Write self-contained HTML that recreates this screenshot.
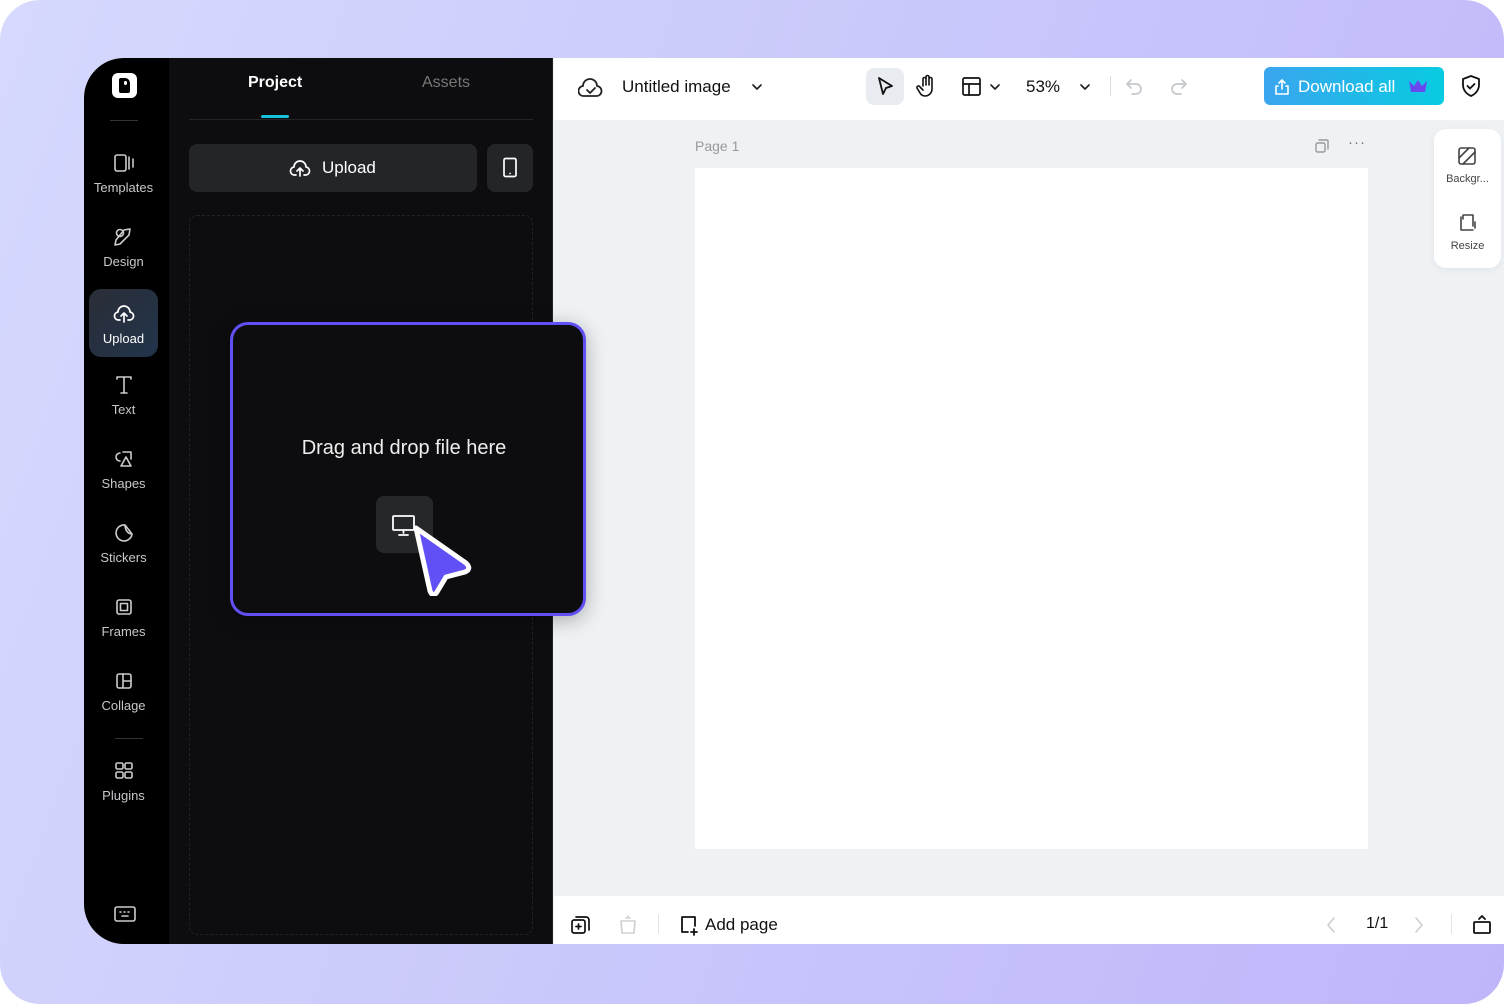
<!DOCTYPE html>
<html><head><meta charset="utf-8"><style>
*{box-sizing:border-box;margin:0;padding:0}
body{width:1504px;height:1004px;background:#fff;font-family:"Liberation Sans",sans-serif;overflow:hidden;position:relative}
.bg{position:absolute;inset:0;border-radius:40px;background:linear-gradient(110deg,#d6d9fd 0%,#c9c8fb 50%,#bfb5fa 100%)}
.app{position:absolute;left:84px;top:58px;width:1420px;height:886px;overflow:hidden;border-radius:40px 0 0 40px;background:#eff2f5}
.side{position:absolute;left:0;top:0;width:85px;height:886px;background:#000}
.panel{position:absolute;left:85px;top:0;width:384px;height:886px;background:#0d0d10;border-right:1px solid #222}
.nav{position:absolute;left:5px;width:69px;height:68px;border-radius:12px;text-align:center;color:#c8c8cc;font-size:13px}
.nav svg{display:block;margin:14px auto 6px}
.nav.act{background:linear-gradient(135deg,#2a2d36,#22344c);color:#fff}
.top{position:absolute;left:470px;top:0;right:0;height:62px;background:#fff}
.bot{position:absolute;left:470px;bottom:0;right:0;height:48px;background:#fff}
svg{fill:none;stroke-linecap:round;stroke-linejoin:round}
.t{position:absolute;white-space:nowrap}
</style></head><body>
<div class="bg"></div>
<div class="app">
 <div class="side">
  <div style="position:absolute;left:28px;top:15px;width:25px;height:25px;background:#fff;border-radius:6px"><div style="position:absolute;left:7px;top:5px;width:11px;height:15px;background:#000;border-radius:2px 5px 2px 2px"></div><div style="position:absolute;left:12px;top:8px;width:3px;height:4px;background:#fff;border-radius:2px"></div></div>
  <div style="position:absolute;left:26px;top:62px;width:28px;height:1px;background:#333"></div>
  <div class="nav" style="top:80px"><svg width="22" height="22" viewBox="0 0 22 22" stroke="#ccc" stroke-width="1.6"><rect x="2" y="3" width="11" height="16" rx="2"/><path d="M16 5v12M20 7v8"/></svg>Templates</div>
  <div class="nav" style="top:154px"><svg width="22" height="22" viewBox="0 0 22 22" stroke="#ccc" stroke-width="1.6"><circle cx="7" cy="7" r="3.5"/><path d="M11 4l6-1-1 6-9 9-5 1 1-5z"/></svg>Design</div>
  <div class="nav act" style="top:231px"><svg width="22" height="22" viewBox="0 0 22 22" stroke="#fff" stroke-width="1.7"><path d="M7 17H6a4 4 0 0 1-1-8 6 6 0 0 1 12 0 4 4 0 0 1-1 8h-1M11 19v-8M8 13l3-3 3 3"/></svg>Upload</div>
  <div class="nav" style="top:302px"><svg width="22" height="22" viewBox="0 0 22 22" stroke="#ccc" stroke-width="1.6"><path d="M4 5V3h14v2M11 3v16M8 19h6"/></svg>Text</div>
  <div class="nav" style="top:376px"><svg width="22" height="22" viewBox="0 0 22 22" stroke="#ccc" stroke-width="1.6"><path d="M7 5a4 4 0 1 0 0 8M10 4h8v7M13 9l-5 9h10z"/></svg>Shapes</div>
  <div class="nav" style="top:450px"><svg width="22" height="22" viewBox="0 0 22 22" stroke="#ccc" stroke-width="1.6"><path d="M19 12a8 8 0 1 1-7-9c0 5 3 9 7 9zM12 3l7 9"/></svg>Stickers</div>
  <div class="nav" style="top:524px"><svg width="22" height="22" viewBox="0 0 22 22" stroke="#ccc" stroke-width="1.6"><rect x="4" y="4" width="14" height="14" rx="2"/><rect x="7.5" y="7.5" width="7" height="7"/></svg>Frames</div>
  <div class="nav" style="top:598px"><svg width="22" height="22" viewBox="0 0 22 22" stroke="#ccc" stroke-width="1.6"><rect x="4" y="4" width="14" height="14" rx="2"/><path d="M10 4v14M10 11h8"/></svg>Collage</div>
  <div style="position:absolute;left:31px;top:680px;width:28px;height:1px;background:#333"></div>
  <div class="nav" style="top:688px"><svg width="22" height="22" viewBox="0 0 22 22" stroke="#ccc" stroke-width="1.6"><rect x="3" y="3" width="7" height="6" rx="1.5"/><rect x="12" y="3" width="7" height="6" rx="1.5"/><rect x="3" y="12" width="7" height="6" rx="1.5"/><rect x="12" y="12" width="7" height="6" rx="1.5"/></svg>Plugins</div>
  <svg style="position:absolute;left:30px;top:847px" width="22" height="18" viewBox="0 0 22 18" stroke="#ccc" stroke-width="1.6"><rect x="1" y="2" width="20" height="14" rx="2"/><path d="M6 7h1M10 7h1M14 7h1M8 11h6"/></svg>
 </div>
 <div class="panel">
  <div class="t" style="left:79px;top:16px;color:#fff;font-size:16px;font-weight:bold">Project</div>
  <div class="t" style="left:253px;top:16px;color:#777;font-size:16px">Assets</div>
  <div style="position:absolute;left:20px;top:61px;width:344px;height:1px;background:#252528"></div>
  <div style="position:absolute;left:92px;top:57px;width:28px;height:3px;background:#16c2d9;border-radius:2px"></div>
  <div style="position:absolute;left:20px;top:86px;width:288px;height:48px;background:#242529;border-radius:8px"></div>
  <svg style="position:absolute;left:120px;top:100px" width="22" height="20" viewBox="0 0 22 20" stroke="#fff" stroke-width="1.7"><path d="M7 17H6a4 4 0 0 1-1-8 6 6 0 0 1 12 0 4 4 0 0 1-1 8h-1M11 18v-7M8 13l3-3 3 3"/></svg>
  <div class="t" style="left:153px;top:100px;color:#fff;font-size:17px">Upload</div>
  <div style="position:absolute;left:318px;top:86px;width:46px;height:48px;background:#242529;border-radius:8px"></div>
  <svg style="position:absolute;left:332px;top:99px" width="18" height="22" viewBox="0 0 18 22" stroke="#fff" stroke-width="1.7"><rect x="3" y="1.5" width="12" height="18" rx="1.5"/><path d="M9 16.5h0"/></svg>
  <div style="position:absolute;left:20px;top:157px;width:344px;height:720px;border:1px dashed #222;border-radius:8px"></div>
 </div>
 <div style="position:absolute;left:146px;top:264px;width:356px;height:294px;background:#0d0d10;border:3px solid #6150f5;border-radius:18px;box-shadow:0 4px 20px rgba(0,0,0,.3)">
  <div class="t" style="left:0;right:8px;top:112px;text-align:center;color:#eee;font-size:20px">Drag and drop file here</div>
  <div style="position:absolute;left:143px;top:171px;width:57px;height:57px;background:#26272b;border-radius:8px"></div>
  <svg style="position:absolute;left:158px;top:189px" width="26" height="24" viewBox="0 0 26 24" stroke="#fff" stroke-width="1.8"><rect x="2" y="2" width="21" height="14" rx="1"/><path d="M12.5 16v3M8 21h9"/></svg>
  <svg style="position:absolute;left:176px;top:196px" width="70" height="75" viewBox="0 0 70 75"><path d="M7 7 L57 42 Q63 48 56 51 L37 56 L28 71 Q24 77 21 70 Z" fill="#6150f5" stroke="#fff" stroke-width="5"/></svg>
 </div>
 <div class="top">
  <svg style="position:absolute;left:24px;top:18px" width="26" height="24" viewBox="0 0 26 24" stroke="#222" stroke-width="1.8"><path d="M7 20H6a5 5 0 0 1-1-10 7 7 0 0 1 14 0 5 5 0 0 1-1 10z"/><path d="M9 14l3 3 5-5"/></svg>
  <div class="t" style="left:68px;top:19px;font-size:17px;color:#111">Untitled image</div>
  <svg style="position:absolute;left:196px;top:22px" width="14" height="14" viewBox="0 0 14 14" stroke="#222" stroke-width="1.7"><path d="M3 5l4 4 4-4"/></svg>
  <div style="position:absolute;left:312px;top:10px;width:38px;height:37px;background:#e8ebef;border-radius:8px"></div>
  <svg style="position:absolute;left:320px;top:17px" width="22" height="22" viewBox="0 0 22 22" stroke="#111" stroke-width="1.8"><path d="M5 3l13 8-6 2-3 6z"/></svg>
  <svg style="position:absolute;left:362px;top:16px" width="22" height="24" viewBox="0 0 22 24" stroke="#111" stroke-width="1.6"><path d="M7 12V5a1.5 1.5 0 0 1 3 0v6V3a1.5 1.5 0 0 1 3 0v8V5a1.5 1.5 0 0 1 3 0v10a7 7 0 0 1-7 7 6 6 0 0 1-5-3l-3-5a1.5 1.5 0 0 1 3-1l3 3"/></svg>
  <svg style="position:absolute;left:407px;top:18px" width="22" height="22" viewBox="0 0 22 22" stroke="#111" stroke-width="1.7"><rect x="2" y="2" width="17" height="17" rx="1.5"/><path d="M2 8h17M8 8v11"/></svg>
  <svg style="position:absolute;left:434px;top:22px" width="14" height="14" viewBox="0 0 14 14" stroke="#222" stroke-width="1.7"><path d="M3 5l4 4 4-4"/></svg>
  <div class="t" style="left:472px;top:19px;font-size:17px;color:#111">53%</div>
  <svg style="position:absolute;left:524px;top:22px" width="14" height="14" viewBox="0 0 14 14" stroke="#222" stroke-width="1.7"><path d="M3 5l4 4 4-4"/></svg>
  <div style="position:absolute;left:556px;top:18px;width:1px;height:20px;background:#ddd"></div>
  <svg style="position:absolute;left:570px;top:18px" width="22" height="22" viewBox="0 0 22 22" stroke="#c4c8cc" stroke-width="1.7"><path d="M7 4L3 8l4 4M3 8h9a5 5 0 0 1 0 10H8"/></svg>
  <svg style="position:absolute;left:613px;top:18px" width="22" height="22" viewBox="0 0 22 22" stroke="#c4c8cc" stroke-width="1.7"><path d="M15 4l4 4-4 4M19 8h-9a5 5 0 0 0 0 10h4"/></svg>
  <div style="position:absolute;left:710px;top:9px;width:180px;height:38px;border-radius:6px;background:linear-gradient(90deg,#3aa6ef,#08cbe1)"></div>
  <svg style="position:absolute;left:720px;top:20px" width="16" height="18" viewBox="0 0 16 18" stroke="#fff" stroke-width="1.6"><path d="M8 11V2M5 5l3-3 3 3M4 8H2v8h12V8h-2"/></svg>
  <div class="t" style="left:744px;top:19px;font-size:17px;color:#fff">Download all</div>
  <svg style="position:absolute;left:854px;top:21px" width="20" height="14" viewBox="0 0 20 14"><path d="M1 2l5 5 4-6 4 6 5-5-2 11H3z" fill="#6a48f0"/></svg>
  <svg style="position:absolute;left:906px;top:16px" width="22" height="24" viewBox="0 0 22 24" stroke="#111" stroke-width="1.8"><path d="M11 2l8 3v6c0 5-3.5 9-8 11-4.5-2-8-6-8-11V5z"/><path d="M7.5 12l2.5 2.5 4.5-4.5"/></svg>
 </div>
 <div class="t" style="left:611px;top:80px;color:#999;font-size:14px">Page 1</div>
 <svg style="position:absolute;left:1230px;top:80px" width="16" height="16" viewBox="0 0 16 16" stroke="#999" stroke-width="1.4"><rect x="2" y="5" width="9" height="9" rx="1.5"/><path d="M5 2h8a1 1 0 0 1 1 1v8"/></svg>
 <div class="t" style="left:1264px;top:76px;color:#777;font-size:15px;letter-spacing:1px">···</div>
 <div style="position:absolute;left:611px;top:110px;width:673px;height:681px;background:#fff"></div>
 <div style="position:absolute;left:1350px;top:71px;width:67px;height:139px;background:#fff;border-radius:12px;box-shadow:0 2px 8px rgba(0,0,0,.06)">
  <svg style="position:absolute;left:23px;top:17px" width="20" height="20" viewBox="0 0 20 20" stroke="#444" stroke-width="1.6"><rect x="2" y="2" width="16" height="16" rx="2"/><path d="M2 12l10-10M6 18l12-12"/></svg>
  <div class="t" style="left:0;right:0;top:44px;text-align:center;font-size:11px;color:#444">Backgr...</div>
  <svg style="position:absolute;left:23px;top:84px" width="20" height="20" viewBox="0 0 20 20" stroke="#444" stroke-width="1.6"><path d="M4 4v13h12M7 2h9v11M18 9v6M6 2v4"/></svg>
  <div class="t" style="left:0;right:0;top:111px;text-align:center;font-size:11px;color:#444">Resize</div>
 </div>
 <div class="bot">
  <svg style="position:absolute;left:16px;top:18px" width="22" height="22" viewBox="0 0 22 22" stroke="#111" stroke-width="1.7"><rect x="2" y="6" width="13" height="13" rx="2"/><path d="M6 3h10a3 3 0 0 1 3 3v10M8.5 10v5M6 12.5h5"/></svg>
  <svg style="position:absolute;left:64px;top:18px" width="20" height="22" viewBox="0 0 20 22" stroke="#cdd0d4" stroke-width="1.6"><path d="M3 7h14l-1 12H4zM8 4h4M10 2v2"/></svg>
  <div style="position:absolute;left:104px;top:18px;width:1px;height:20px;background:#e2e2e2"></div>
  <svg style="position:absolute;left:124px;top:18px" width="22" height="22" viewBox="0 0 22 22" stroke="#111" stroke-width="1.8"><path d="M10 18H4V3h13v9M16 15v6M13 18h6"/></svg>
  <div class="t" style="left:151px;top:19px;font-size:17px;color:#111">Add page</div>
  <svg style="position:absolute;left:770px;top:20px" width="14" height="18" viewBox="0 0 14 18" stroke="#ccc" stroke-width="1.5"><path d="M10 2L4 9l6 7"/></svg>
  <div class="t" style="left:812px;top:19px;font-size:16px;color:#111">1/1</div>
  <svg style="position:absolute;left:858px;top:20px" width="14" height="18" viewBox="0 0 14 18" stroke="#ccc" stroke-width="1.5"><path d="M4 2l6 7-6 7"/></svg>
  <div style="position:absolute;left:897px;top:18px;width:1px;height:20px;background:#e2e2e2"></div>
  <svg style="position:absolute;left:917px;top:17px" width="22" height="22" viewBox="0 0 22 22" stroke="#111" stroke-width="1.8"><rect x="3" y="9" width="16" height="11" rx="1"/><path d="M8 6l3-3 3 3"/></svg>
 </div>
</div>
</body></html>
